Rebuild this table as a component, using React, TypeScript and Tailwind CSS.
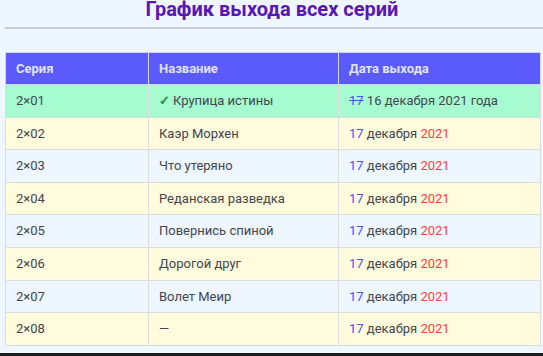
import React from "react";

const rows = [
  { ep: "2×01", name: "Крупица истины", done: true },
  { ep: "2×02", name: "Каэр Морхен" },
  { ep: "2×03", name: "Что утеряно" },
  { ep: "2×04", name: "Реданская разведка" },
  { ep: "2×05", name: "Повернись спиной" },
  { ep: "2×06", name: "Дорогой друг" },
  { ep: "2×07", name: "Волет Меир" },
  { ep: "2×08", name: "—" },
];

export default function App() {
  return (
    <div
      className="w-[543px] h-[356px] bg-[#eef6ff] overflow-hidden flex flex-col"
      style={{ fontFamily: "Roboto, 'Noto Sans', sans-serif" }}
    >
      <div className="h-[27px] flex justify-center">
        <h1 className="mt-[-3px] h-[24px] text-[20px] leading-[24px] font-bold text-[#5a16b4] ml-[1px]">
          График выхода всех серий
        </h1>
      </div>
      <div className="ml-[5px] h-[2px] bg-[#c9ccd0]" />
      <div className="h-[23px]" />
      <div className="px-[5px] pr-[2px]">
        <table className="w-full border-collapse text-[13px] text-[#41464f]">
          <thead>
            <tr className="bg-[#5b5bfb] h-[32px]">
              <th className="w-[143px] text-left font-bold text-[#dfe3ff] pl-[10px] border border-[#d4d4e8]">Серия</th>
              <th className="w-[190px] text-left font-bold text-[#dfe3ff] pl-[10px] border border-[#d4d4e8]">Название</th>
              <th className="text-left font-bold text-[#dfe3ff] pl-[10px] border border-[#d4d4e8]">Дата выхода</th>
            </tr>
          </thead>
          <tbody>
            {rows.map((r, i) => {
              const bg = r.done
                ? "bg-[#a7fbd0]"
                : i % 2 === 1
                ? "bg-[#fffbdc]"
                : "bg-[#eef6ff]";
              return (
                <tr key={r.ep} className={`${bg} h-[32.6px]`}>
                  <td className="pl-[10px] border border-[#dcdcdc]">{r.ep}</td>
                  <td className="pl-[10px] border border-[#dcdcdc]">
                    {r.done && <span className="text-[#23903a] font-bold mr-[3px]">✓</span>}
                    {r.name}
                  </td>
                  <td className="pl-[10px] border border-[#dcdcdc]">
                    {r.done ? (
                      <>
                        <span className="line-through text-[#4d4dff]">17</span> 16 декабря 2021 года
                      </>
                    ) : (
                      <>
                        <span className="text-[#4d4dff]">17</span> декабря{" "}
                        <span className="text-[#ff4040]">2021</span>
                      </>
                    )}
                  </td>
                </tr>
              );
            })}
          </tbody>
        </table>
      </div>
      <div className="flex-1" />
      <div className="h-[3px] bg-[#1e1e1e]" />
    </div>
  );
}
